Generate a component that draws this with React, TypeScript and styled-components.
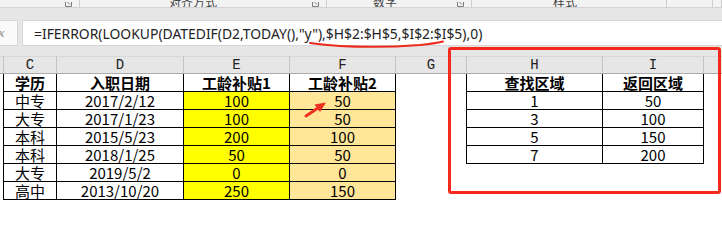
import styled, { createGlobalStyle } from 'styled-components';

const GlobalStyle = createGlobalStyle`
  html, body {
    margin: 0;
    padding: 0;
    background: #ffffff;
  }
`;

const StyledApp = styled.div`
  position: relative;
  width: 722px;
  height: 249px;
  overflow: hidden;
  display: flex;
  flex-direction: column;
  background: #ffffff;
  font-family: 'Noto Sans CJK SC', sans-serif;
`;

const StyledRibbon = styled.div`
  display: flex;
  height: 7px;
  border-bottom: 1px solid #d4d4d4;
  background: #f3f3f3;
  overflow: hidden;
`;

const StyledGroup = styled.div<{ $width?: number; $pad?: number }>`
  position: relative;
  display: flex;
  align-items: flex-end;
  justify-content: center;
  box-sizing: border-box;
  width: ${({ $width }) => ($width ? `${$width}px` : 'auto')};
  flex: ${({ $width }) => ($width ? 'none' : '1')};
  padding-right: ${({ $pad }) => $pad || 0}px;
  border-right: 1px solid #cdcdcd;
`;

const StyledGroupLabel = styled.span`
  font-size: 12px;
  line-height: 14px;
  margin-bottom: -2px;
  color: #444444;
  white-space: nowrap;
`;

const StyledLauncher = styled.svg`
  position: absolute;
  right: 7px;
  bottom: 0;
`;

const StyledBand = styled.div`
  height: 10px;
  background: #e6e6e6;
`;

const StyledFormulaRow = styled.div`
  display: flex;
  gap: 4px;
  height: 26px;
  padding: 2px 0 10px;
  background: #e6e6e6;
`;

const StyledFxBox = styled.div`
  width: 18px;
  overflow: hidden;
  background: #fafafa;
  border: 1px solid #d6d6d6;
  border-left: none;
  box-sizing: border-box;
  display: flex;
  align-items: center;
`;

const StyledFx = styled.span`
  margin-left: -5px;
  font-family: 'Liberation Serif', serif;
  font-style: italic;
  font-size: 13px;
  color: #8a8a8a;
`;

const StyledFormula = styled.div`
  flex: 1;
  display: flex;
  align-items: center;
  padding-left: 11px;
  background: #ffffff;
  border: 1px solid #d6d6d6;
  border-right: none;
  font-family: 'Noto Sans', sans-serif;
  font-size: 13.9px;
  color: #222222;
  white-space: nowrap;
`;

const StyledSheet = styled.div`
  display: grid;
  grid-template-columns: 4px 53px 127px 106px 106px 71px 136px 101px 1fr;
  grid-auto-rows: 18px;
`;

const StyledColHead = styled.div<{ $last?: boolean }>`
  display: flex;
  align-items: center;
  justify-content: center;
  box-sizing: border-box;
  background: #e6e6e6;
  border-top: 1px solid #d8d8d8;
  border-bottom: 1px solid #ababab;
  border-right: ${({ $last }) => ($last ? 'none' : '1px solid #c4c4c4')};
  font-family: 'Liberation Mono', monospace;
  font-size: 14px;
  color: #222222;
`;

const StyledCell = styled.div<{
  $bg?: string;
  $bold?: boolean;
  $right?: boolean;
  $bottom?: boolean;
}>`
  display: flex;
  align-items: center;
  justify-content: center;
  box-sizing: border-box;
  background: ${({ $bg }) => $bg || '#ffffff'};
  border-right: ${({ $right }) => ($right ? '1px solid #000000' : 'none')};
  border-bottom: ${({ $bottom }) => ($bottom ? '1px solid #000000' : 'none')};
  font-size: 15px;
  line-height: 16px;
  font-weight: ${({ $bold }) => ($bold ? 700 : 400)};
  color: #000000;
  white-space: nowrap;
`;

const StyledOverlay = styled.svg`
  position: absolute;
  left: 0;
  top: 0;
  pointer-events: none;
`;

const StyledFrame = styled.div`
  position: absolute;
  left: 448px;
  top: 47px;
  width: 273px;
  height: 147px;
  box-sizing: border-box;
  border: 3px solid #f52a1d;
  border-radius: 3px;
  pointer-events: none;
`;

const groups = [
  { width: 80, label: '', launcher: true, pad: 0 },
  { width: 247, label: '对齐方式', launcher: true, pad: 20 },
  { width: 145, label: '数字', launcher: true, pad: 28 },
  { width: 195, label: '样式', launcher: false, pad: 8 },
  { width: 46, label: '', launcher: false, pad: 0 },
  { width: 0, label: '', launcher: false, pad: 0 },
];

const letters = ['', 'C', 'D', 'E', 'F', 'G', 'H', 'I', ''];

const leftHead = ['学历', '入职日期', '工龄补贴1', '工龄补贴2'];
const leftRows = [
  ['中专', '2017/2/12', '100', '50'],
  ['大专', '2017/1/23', '100', '50'],
  ['本科', '2015/5/23', '200', '100'],
  ['本科', '2018/1/25', '50', '50'],
  ['大专', '2019/5/2', '0', '0'],
  ['高中', '2013/10/20', '250', '150'],
];

const rightHead = ['查找区域', '返回区域'];
const rightRows = [
  ['1', '50'],
  ['3', '100'],
  ['5', '150'],
  ['7', '200'],
];

const fills = ['', '', '#ffff00', '#ffe699'];

const App = () => {
  const rows = [leftHead, ...leftRows];
  const lookup = [rightHead, ...rightRows];

  return (
    <StyledApp>
      <GlobalStyle />
      <StyledRibbon>
        {groups.map((group, i) => (
          <StyledGroup key={i} $width={group.width} $pad={group.pad}>
            {group.label && <StyledGroupLabel>{group.label}</StyledGroupLabel>}
            {group.launcher && (
              <StyledLauncher width="7" height="5" viewBox="0 0 7 5">
                <path d="M0.5 0 V4.5 H6.5 V0" fill="none" stroke="#7a7a7a" />
                <path d="M2.5 0 L5 2.5" stroke="#7a7a7a" />
              </StyledLauncher>
            )}
          </StyledGroup>
        ))}
      </StyledRibbon>
      <StyledBand />
      <StyledFormulaRow>
        <StyledFxBox>
          <StyledFx>fx</StyledFx>
        </StyledFxBox>
        <StyledFormula>
          =IFERROR(LOOKUP(DATEDIF(D2,TODAY(),&quot;y&quot;),$H$2:$H$5,$I$2:$I$5),0)
        </StyledFormula>
      </StyledFormulaRow>
      <StyledSheet>
        {letters.map((letter, i) => (
          <StyledColHead key={`h${i}`} $last={i === letters.length - 1}>
            {letter}
          </StyledColHead>
        ))}
        {rows.map((row, r) => {
          const look = lookup[r];
          const head = r === 0;
          return [
            <StyledCell key={`s${r}`} $right />,
            ...row.map((text, c) => (
              <StyledCell
                key={`l${r}${c}`}
                $right
                $bottom
                $bold={head}
                $bg={head ? '' : fills[c]}
              >
                {text}
              </StyledCell>
            )),
            <StyledCell key={`g${r}`} $right={!!look} />,
            ...(look
              ? look.map((text, c) => (
                  <StyledCell key={`r${r}${c}`} $right $bottom $bold={head}>
                    {text}
                  </StyledCell>
                ))
              : [<StyledCell key={`r${r}a`} />, <StyledCell key={`r${r}b`} />]),
            <StyledCell key={`t${r}`} />,
          ];
        })}
      </StyledSheet>
      <StyledFrame />
      <StyledOverlay width="722" height="249" viewBox="0 0 722 249">
        <path
          d="M310 43 C 340 47, 380 48, 420 45 C 430 44, 437 43, 443 41.5"
          fill="none"
          stroke="#ec2a1c"
          strokeWidth="2"
          strokeLinecap="round"
        />
        <path d="M306 116 L318 108" stroke="#f0301f" strokeWidth="3" strokeLinecap="round" />
        <polygon points="326,102.5 314.5,104.5 320,112" fill="#f0301f" />
      </StyledOverlay>
    </StyledApp>
  );
};

export default App;
